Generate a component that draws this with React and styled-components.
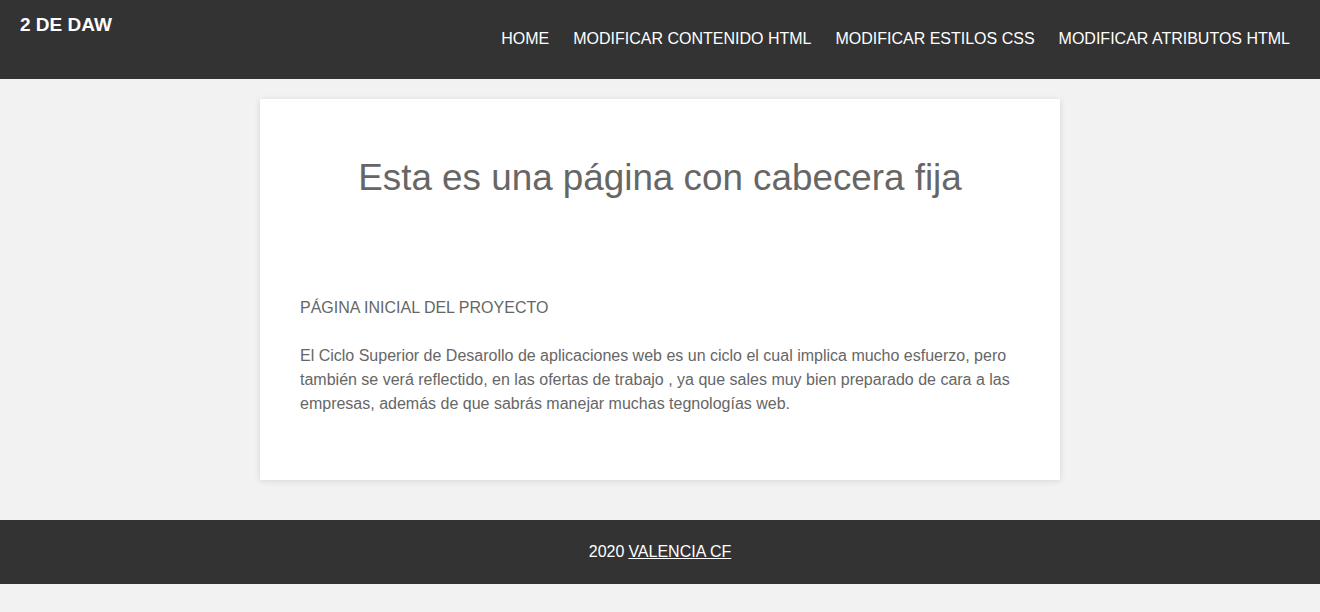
import React from "react";
import styled, { createGlobalStyle } from "styled-components";

const GlobalStyle = createGlobalStyle`
  html, body {
    margin: 0;
    padding: 0;
    background: #f2f2f2;
    font-family: "Liberation Sans", Arial, sans-serif;
  }
`;

const navItems = [
  "HOME",
  "MODIFICAR CONTENIDO HTML",
  "MODIFICAR ESTILOS CSS",
  "MODIFICAR ATRIBUTOS HTML",
];

const App = () => {
  return (
    <>
      <GlobalStyle />
      <Header>
        <Logo>2 DE DAW</Logo>
        <Nav>
          {navItems.map((item) => (
            <NavLink key={item} href="#">
              {item}
            </NavLink>
          ))}
        </Nav>
      </Header>
      <Main>
        <Card>
          <Title>Esta es una página con cabecera fija</Title>
          <Section>
            <Text>PÁGINA INICIAL DEL PROYECTO</Text>
            <Text>
              El Ciclo Superior de Desarollo de aplicaciones web es un ciclo el
              cual implica mucho esfuerzo, pero también se verá reflectido, en
              las ofertas de trabajo , ya que sales muy bien preparado de cara a
              las empresas, además de que sabrás manejar muchas tegnologías web.
            </Text>
          </Section>
        </Card>
      </Main>
      <Footer>
        2020 <FooterLink href="#">VALENCIA CF</FooterLink>
      </Footer>
      <Bottom />
    </>
  );
};

export default App;

const Header = styled.header`
  display: flex;
  justify-content: space-between;
  align-items: flex-start;
  height: 79px;
  padding: 0 30px 0 20px;
  background-color: #333333;
  box-sizing: border-box;
`;

const Logo = styled.div`
  margin-top: 14px;
  color: #ffffff;
  font-size: 19px;
  font-weight: bold;
  line-height: 22px;
`;

const Nav = styled.nav`
  display: flex;
  gap: 24px;
  margin-top: 30px;
`;

const NavLink = styled.a`
  color: #ffffff;
  font-size: 16px;
  line-height: 18px;
  text-decoration: none;
`;

const Main = styled.main`
  display: flex;
  justify-content: center;
  padding: 20px 0 40px;
`;

const Card = styled.div`
  width: 800px;
  padding: 40px;
  box-sizing: border-box;
  background-color: #ffffff;
  box-shadow: 0 1px 6px rgba(0, 0, 0, 0.12);
`;

const Title = styled.h1`
  margin: 18px 0 0;
  color: #666666;
  font-size: 36.8px;
  font-weight: normal;
  line-height: 41px;
  text-align: center;
`;

const Section = styled.section`
  padding-top: 98px;
  padding-bottom: 24px;
`;

const Text = styled.p`
  margin: 0 0 24px;
  color: #666666;
  font-size: 16px;
  line-height: 24px;
  &:last-child {
    margin-bottom: 0;
  }
`;

const Footer = styled.footer`
  height: 64px;
  display: flex;
  align-items: center;
  justify-content: center;
  gap: 4px;
  background-color: #333333;
  color: #ffffff;
  font-size: 16px;
`;

const FooterLink = styled.a`
  color: #ffffff;
  text-decoration: underline;
`;

const Bottom = styled.div`
  height: 28px;
`;
